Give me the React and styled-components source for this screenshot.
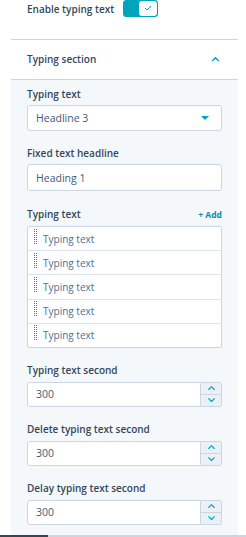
import React from 'react';
import styled, { createGlobalStyle } from 'styled-components';

const GlobalStyle = createGlobalStyle`
    html, body {
        margin: 0;
        padding: 0;
        background: #ffffff;
        overflow: hidden;
    }
    body {
        font-family: "Open Sans", "Liberation Sans", sans-serif;
        color: #33475b;
    }
`;

const Page = styled.div`
    width: 246px;
    height: 537px;
    overflow: hidden;
    position: relative;
`;

const TopRow = styled.div`
    display: flex;
    align-items: center;
    gap: 9px;
    padding-left: 27px;
    height: 19px;
`;

const Label = styled.div`
    font-size: 10px;
    font-weight: 600;
    line-height: 13px;
    color: #33475b;
`;

const Toggle = styled.div`
    display: flex;
    width: 35px;
    height: 17px;
    margin-top: -3px;
    border: 1px solid #00a4bd;
    border-radius: 3px;
    box-sizing: border-box;
    background: #00a4bd;
    overflow: hidden;
`;

const Knob = styled.div`
    margin-left: auto;
    width: 18px;
    height: 100%;
    background: #ffffff;
    border-radius: 3px;
    display: flex;
    align-items: center;
    justify-content: center;
`;

const Section = styled.div`
    margin: 20px 8px 0 11px;
    border-top: 1px solid #cbd6e2;
`;

const SectionHeader = styled.div`
    height: 39px;
    display: flex;
    align-items: center;
    justify-content: space-between;
    padding: 0 19px 0 16px;
    border-bottom: 1px solid #cbd6e2;
    background: #ffffff;
`;

const Body = styled.div`
    background: #f5f8fa;
    padding: 8px 16px 40px;
    display: flex;
    flex-direction: column;
`;

const Field = styled.div`
    display: flex;
    flex-direction: column;
    gap: ${p => p.$gap || 4}px;
    margin-top: ${p => p.$top || 0}px;
`;

const LabelRow = styled.div`
    display: flex;
    justify-content: space-between;
    align-items: center;
`;

const AddLink = styled.span`
    font-size: 8.5px;
    font-weight: 700;
    color: #0091ae;
`;

const Box = styled.div`
    height: ${p => p.$h || 26}px;
    box-sizing: border-box;
    background: #ffffff;
    border: 1px solid #cbd6e2;
    border-radius: 3px;
    display: flex;
    align-items: center;
    padding: 0 0 0 8px;
    font-size: 10.5px;
    color: #425b76;
`;

const Caret = styled.div`
    margin-left: auto;
    margin-right: 12px;
    width: 0;
    height: 0;
    border-left: 4px solid transparent;
    border-right: 4px solid transparent;
    border-top: 4px solid #00a4bd;
`;

const List = styled.div`
    background: #ffffff;
    border: 1px solid #cbd6e2;
    border-radius: 2px;
`;

const ListRow = styled.div`
    height: 23.2px;
    display: flex;
    align-items: center;
    gap: 6px;
    padding-left: 6px;
    font-size: 10px;
    color: #516f90;
    & + & {
        border-top: 1px solid #dfe3eb;
    }
`;

const NumberWrap = styled.div`
    display: flex;
    height: 25px;
`;

const NumberBox = styled(Box)`
    flex: 1;
    border-radius: 3px 0 0 3px;
    height: 100%;
`;

const Stepper = styled.div`
    width: 20px;
    display: flex;
    flex-direction: column;
    border: 1px solid #cbd6e2;
    border-left: none;
    border-radius: 0 3px 3px 0;
    overflow: hidden;
`;

const StepBtn = styled.div`
    flex: 1;
    background: #eaf0f6;
    display: flex;
    align-items: center;
    justify-content: center;
    & + & {
        border-top: 1px solid #cbd6e2;
    }
`;

const ScrollBar = styled.div`
    position: absolute;
    left: 0;
    right: 0;
    bottom: 0;
    height: 2px;
    background: #cbd6e2;
    &::before {
        content: '';
        position: absolute;
        left: 0;
        top: 0;
        width: 48px;
        height: 2px;
        background: #33475b;
    }
`;

function Chevron({ up, size = 8, color = '#00a4bd', width = 2 }) {
    return (
        <svg width={size} height={size * 0.6} viewBox="0 0 10 6">
            <path
                d={up ? 'M1 5 L5 1 L9 5' : 'M1 1 L5 5 L9 1'}
                fill="none"
                stroke={color}
                strokeWidth={width}
                strokeLinecap="round"
                strokeLinejoin="round"
            />
        </svg>
    );
}

function DragHandle() {
    const dots = [];
    for (let r = 0; r < 8; r++) {
        dots.push(<rect key={'a' + r} x="0" y={r * 2} width="1" height="1" />);
        dots.push(<rect key={'b' + r} x="2" y={r * 2} width="1" height="1" />);
    }
    return (
        <svg width="3" height="16" viewBox="0 0 3 16" fill="#516f90" style={{ marginTop: -4 }}>
            {dots}
        </svg>
    );
}

function NumberField({ label, value }) {
    return (
        <Field $top={16} $gap={5}>
            <Label>{label}</Label>
            <NumberWrap>
                <NumberBox>{value}</NumberBox>
                <Stepper>
                    <StepBtn><Chevron up size={7} width={1.6} /></StepBtn>
                    <StepBtn><Chevron size={7} width={1.6} /></StepBtn>
                </Stepper>
            </NumberWrap>
        </Field>
    );
}

export default function App() {
    const items = ['Typing text', 'Typing text', 'Typing text', 'Typing text', 'Typing text'];

    return (
        <Page>
            <GlobalStyle />
            <TopRow>
                <Label>Enable typing text</Label>
                <Toggle>
                    <Knob>
                        <svg width="8" height="6" viewBox="0 0 8 6">
                            <path d="M1 3 L3 5 L7 1" fill="none" stroke="#00a4bd" strokeWidth="1" />
                        </svg>
                    </Knob>
                </Toggle>
            </TopRow>

            <Section>
                <SectionHeader>
                    <Label>Typing section</Label>
                    <Chevron up size={7} width={2} />
                </SectionHeader>
                <Body>
                    <Field>
                        <Label>Typing text</Label>
                        <Box>
                            Headline 3
                            <Caret />
                        </Box>
                    </Field>

                    <Field $top={16} $gap={4}>
                        <Label>Fixed text headline</Label>
                        <Box $h={27}>Heading 1</Box>
                    </Field>

                    <Field $top={17} $gap={5}>
                        <LabelRow>
                            <Label>Typing text</Label>
                            <AddLink>+ Add</AddLink>
                        </LabelRow>
                        <List>
                            {items.map((item, i) => (
                                <ListRow key={i}>
                                    <DragHandle />
                                    {item}
                                </ListRow>
                            ))}
                        </List>
                    </Field>

                    <NumberField label="Typing text second" value="300" />
                    <NumberField label="Delete typing text second" value="300" />
                    <NumberField label="Delay typing text second" value="300" />
                </Body>
            </Section>
            <ScrollBar />
        </Page>
    );
}
